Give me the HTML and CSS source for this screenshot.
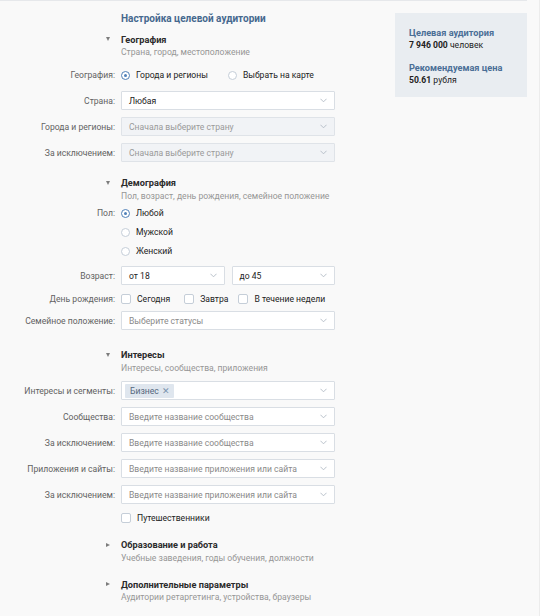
FILE: index.html
```html
<!DOCTYPE html>
<html lang="ru">
<head>
<meta charset="utf-8">
<title>Настройка целевой аудитории</title>
<link rel="stylesheet" href="styles.css">
</head>
<body>
<div class="page">
  <main class="form">
    <h1 class="title">Настройка целевой аудитории</h1>

    <section class="sec">
      <div class="row head"><span class="lbl"><i class="tri down"></i></span><span class="htext">География</span></div>
      <div class="row sub"><span class="lbl"></span><span>Страна, город, местоположение</span></div>
      <div class="row radios r-geo">
        <span class="lbl">География:</span>
        <span class="opt"><i class="radio on"></i>Города и регионы</span>
        <span class="opt opt2"><i class="radio"></i>Выбрать на карте</span>
      </div>
      <div class="row sel r-first"><span class="lbl">Страна:</span><div class="select"><span class="val">Любая</span><svg class="chev" viewBox="0 0 8 5"><polyline points="0.5,0.5 4,4 7.5,0.5"/></svg></div></div>
      <div class="row sel"><span class="lbl">Города и регионы:</span><div class="select dis"><span class="ph">Сначала выберите страну</span><svg class="chev" viewBox="0 0 8 5"><polyline points="0.5,0.5 4,4 7.5,0.5"/></svg></div></div>
      <div class="row sel"><span class="lbl">За исключением:</span><div class="select dis"><span class="ph">Сначала выберите страну</span><svg class="chev" viewBox="0 0 8 5"><polyline points="0.5,0.5 4,4 7.5,0.5"/></svg></div></div>
    </section>

    <section class="sec s-demo">
      <div class="row head"><span class="lbl"><i class="tri down"></i></span><span class="htext">Демография</span></div>
      <div class="row sub"><span class="lbl"></span><span>Пол, возраст, день рождения, семейное положение</span></div>
      <div class="row radios r-sex1"><span class="lbl">Пол:</span><span class="opt"><i class="radio on"></i>Любой</span></div>
      <div class="row radios r-sex"><span class="lbl"></span><span class="opt"><i class="radio"></i>Мужской</span></div>
      <div class="row radios r-sex"><span class="lbl"></span><span class="opt"><i class="radio"></i>Женский</span></div>
      <div class="row sel r-age"><span class="lbl">Возраст:</span>
        <div class="select half"><span class="val">от 18</span><svg class="chev" viewBox="0 0 8 5"><polyline points="0.5,0.5 4,4 7.5,0.5"/></svg></div>
        <div class="select half"><span class="val">до 45</span><svg class="chev" viewBox="0 0 8 5"><polyline points="0.5,0.5 4,4 7.5,0.5"/></svg></div>
      </div>
      <div class="row checks r-bday"><span class="lbl">День рождения:</span>
        <span class="opt c1"><i class="check"></i>Сегодня</span>
        <span class="opt c2"><i class="check"></i>Завтра</span>
        <span class="opt"><i class="check"></i>В течение недели</span>
      </div>
      <div class="row sel r-family"><span class="lbl">Семейное положение:</span><div class="select"><span class="ph">Выберите статусы</span><svg class="chev" viewBox="0 0 8 5"><polyline points="0.5,0.5 4,4 7.5,0.5"/></svg></div></div>
    </section>

    <section class="sec s-int">
      <div class="row head"><span class="lbl"><i class="tri down"></i></span><span class="htext">Интересы</span></div>
      <div class="row sub"><span class="lbl"></span><span>Интересы, сообщества, приложения</span></div>
      <div class="row sel r-first2"><span class="lbl">Интересы и сегменты:</span><div class="select tagged"><span class="tag">Бизнес <b class="x">✕</b></span><svg class="chev" viewBox="0 0 8 5"><polyline points="0.5,0.5 4,4 7.5,0.5"/></svg></div></div>
      <div class="row sel"><span class="lbl">Сообщества:</span><div class="select"><span class="ph">Введите название сообщества</span><svg class="chev" viewBox="0 0 8 5"><polyline points="0.5,0.5 4,4 7.5,0.5"/></svg></div></div>
      <div class="row sel"><span class="lbl">За исключением:</span><div class="select"><span class="ph">Введите название сообщества</span><svg class="chev" viewBox="0 0 8 5"><polyline points="0.5,0.5 4,4 7.5,0.5"/></svg></div></div>
      <div class="row sel"><span class="lbl">Приложения и сайты:</span><div class="select"><span class="ph">Введите название приложения или сайта</span><svg class="chev" viewBox="0 0 8 5"><polyline points="0.5,0.5 4,4 7.5,0.5"/></svg></div></div>
      <div class="row sel"><span class="lbl">За исключением:</span><div class="select"><span class="ph">Введите название приложения или сайта</span><svg class="chev" viewBox="0 0 8 5"><polyline points="0.5,0.5 4,4 7.5,0.5"/></svg></div></div>
      <div class="row checks r-travel"><span class="lbl"></span><span class="opt"><i class="check"></i>Путешественники</span></div>
    </section>

    <section class="sec s-edu">
      <div class="row head"><span class="lbl"><i class="tri right"></i></span><span class="htext">Образование и работа</span></div>
      <div class="row sub"><span class="lbl"></span><span>Учебные заведения, годы обучения, должности</span></div>
    </section>

    <section class="sec s-extra">
      <div class="row head"><span class="lbl"><i class="tri right"></i></span><span class="htext">Дополнительные параметры</span></div>
      <div class="row sub"><span class="lbl"></span><span>Аудитории ретаргетинга, устройства, браузеры</span></div>
    </section>
  </main>

  <aside class="summary">
    <div class="sum-title">Целевая аудитория</div>
    <div class="sum-val"><b>7 946 000</b> человек</div>
    <div class="sum-title st2">Рекомендуемая цена</div>
    <div class="sum-val"><b>50.61</b> рубля</div>
  </aside>
</div>
</body>
</html>
```

FILE: styles.css
```css
* { box-sizing: border-box; }
html, body { margin: 0; padding: 0; }
body {
  background: #f9f9f9;
  font-family: Roboto, "Noto Sans", Arial, sans-serif;
  font-size: 8.6px;
  color: #222;
}
.page {
  display: flex;
  width: 540px;
  height: 616px;
  border-right: 1px solid #ececec;
  position: relative;
}
.page::before {
  content: "";
  position: absolute;
  left: 0; top: 0;
  width: 527px;
  border-top: 1px solid #e6e8eb;
}
.form {
  width: 395px;
  flex: none;
  padding-top: 12px;
}
.title {
  margin: 0 0 0 121px;
  font-size: 10px;
  line-height: 14px;
  font-weight: bold;
  color: #45688e;
}
.sec { display: flow-root; }
.row {
  display: flex;
  align-items: center;
}
.lbl {
  width: 115px;
  flex: none;
  margin-right: 6px;
  text-align: right;
  color: #626262;
  white-space: nowrap;
}
.head { margin-top: 6.5px; line-height: 13px; height: 13px; }
.head .lbl { display: flex; justify-content: flex-end; padding-right: 5px; }
.htext { font-weight: bold; font-size: 9.2px; color: #2b2b2b; }
.sub { line-height: 13px; height: 13px; margin-top: 0.5px; color: #969696; }
.tri { display: block; width: 0; height: 0; }
.tri.down {
  border-left: 2.5px solid transparent;
  border-right: 2.5px solid transparent;
  border-top: 4px solid #7d7d7d;
}
.tri.right {
  border-top: 2.5px solid transparent;
  border-bottom: 2.5px solid transparent;
  border-left: 4px solid #7d7d7d;
}
.radios, .checks { height: 14px; line-height: 14px; }
.opt { display: flex; align-items: center; color: #222; white-space: nowrap; }
.radio {
  display: block;
  width: 9px; height: 9px;
  border-radius: 50%;
  border: 1px solid #c5ced8;
  background: #fff;
  margin-right: 6px;
  position: relative;
}
.radio.on { border-color: #5181b8; }
.radio.on::after {
  content: "";
  position: absolute;
  left: 2px; top: 2px;
  width: 3px; height: 3px;
  border-radius: 50%;
  background: #5181b8;
}
.opt2 { margin-left: 20px; }
.check {
  display: block;
  width: 10px; height: 10px;
  border-radius: 2px;
  border: 1px solid #c5ced8;
  background: #fff;
  margin-right: 6px;
}
.c1 { margin-right: 14px; }
.c2 { margin-right: 10px; }
.r-geo { margin-top: 9px; }
.sel { margin-top: 7px; height: 19px; }
.r-first { margin-top: 9px; }
.select {
  width: 214px;
  height: 19px;
  border: 1px solid #d9dee4;
  background: #fff;
  border-radius: 1px;
  display: flex;
  align-items: center;
  padding: 0 7px 0 7px;
  position: relative;
}
.select .val { color: #222; }
.select .ph { color: #8a8a8a; }
.select.dis { background: #f1f3f6; border-color: #dfe3e8; }
.select.dis .ph { color: #9a9a9a; }
.chev {
  margin-left: auto;
  width: 7px; height: 5px;
  fill: none;
  stroke: #b0b9c3;
  stroke-width: 1;
}
.half { width: 103.5px; }
.half + .half { margin-left: 7px; }
.s-demo { margin-top: 7.5px; }
.r-sex1 { margin-top: 3.5px; }
.r-sex { margin-top: 5px; }
.r-age { margin-top: 8px; }
.r-bday { margin-top: 7px; }
.r-family { margin-top: 5px; }
.s-int { margin-top: 11.5px; }
.r-first2 { margin-top: 6.5px; }
.tagged { padding-left: 3px; }
.tag {
  background: #dfe6ee;
  color: #55677d;
  height: 14px;
  line-height: 14px;
  padding: 0 4px 0 5px;
  border-radius: 1px;
  display: flex;
  align-items: center;
}
.tag .x { font-weight: normal; color: #7b93ad; margin-left: 3px; font-size: 9px; }
.r-travel { margin-top: 7px; }
.s-edu { margin-top: 6.5px; }
.s-extra { margin-top: 6.5px; }
.summary {
  margin-top: 13px;
  width: 132px;
  height: 84px;
  background: #e9edf1;
  padding: 13px 0 0 14px;
}
.sum-title { font-weight: bold; color: #4a6e96; font-size: 9.2px; line-height: 13px; }
.sum-val { color: #222; line-height: 13px; font-size: 8.6px; }
.sum-val b { font-weight: bold; }
.st2 { margin-top: 9px; }
```
